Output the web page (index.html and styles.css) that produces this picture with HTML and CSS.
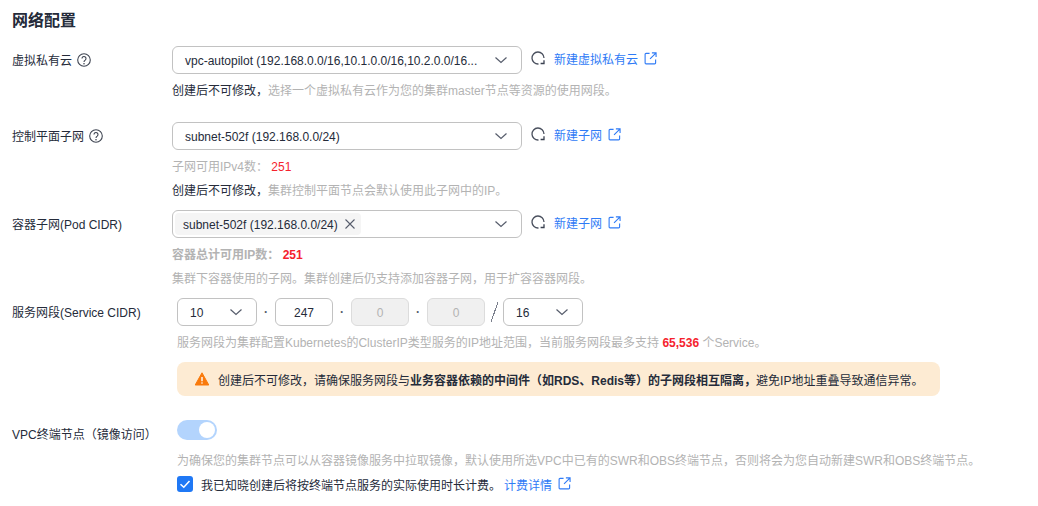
FILE: index.html
```html
<!DOCTYPE html>
<html lang="zh-CN">
<head>
<meta charset="utf-8">
<title>网络配置</title>
<link rel="stylesheet" href="styles.css">
</head>
<body>
<svg class="defs" width="0" height="0" aria-hidden="true">
  <symbol id="i-chev" viewBox="0 0 16 16"><path d="M2.500 5.500 8 10.500l5.500-5" fill="none" stroke="#575d6c" stroke-width="1.200"/></symbol>
  <symbol id="i-refresh" viewBox="0 0 14 14"><path d="M7.500 13A6 6 0 1 1 13 7" fill="none" stroke="#4a505e" stroke-width="1.300"/><path d="M13 9.200v3.300H9.600" fill="none" stroke="#3a4150" stroke-width="1.300"/></symbol>
  <symbol id="i-ext" viewBox="0 0 14 14"><path d="M6 1.500H2.200a1 1 0 0 0-1 1v9.300a1 1 0 0 0 1 1h9.300a1 1 0 0 0 1-1V8M6.500 7.500 12.500 1.500M8.500 1h4.500v4.500" fill="none" stroke="#2f7bf6" stroke-width="1.200"/></symbol>
  <symbol id="i-help" viewBox="0 0 14 14"><circle cx="7" cy="7" r="6.300" fill="none" stroke="#3f4552" stroke-width="1.100"/><path d="M5 5.500a2 2 0 1 1 3.200 1.600C7.500 7.600 7 8 7 9" fill="none" stroke="#3f4552" stroke-width="1.100"/><circle cx="7" cy="10.700" r=".8" fill="#3f4552"/></symbol>
</svg>
<main class="page">
  <h2 class="title">网络配置</h2>

  <section class="row row-vpc">
    <div class="label">虚拟私有云<svg class="help"><use href="#i-help"/></svg></div>
    <div class="body">
      <div class="ctl-line">
        <div class="select wide"><span class="val">vpc-autopilot (192.168.0.0/16,10.1.0.0/16,10.2.0.0/16...</span><svg class="chev"><use href="#i-chev"/></svg></div>
        <svg class="refresh"><use href="#i-refresh"/></svg>
        <a class="link">新建虚拟私有云<svg class="ext"><use href="#i-ext"/></svg></a>
      </div>
      <p class="hint first"><span class="strong">创建后不可修改，</span>选择一个虚拟私有云作为您的集群master节点等资源的使用网段。</p>
    </div>
  </section>

  <section class="row row-ctrl">
    <div class="label">控制平面子网<svg class="help"><use href="#i-help"/></svg></div>
    <div class="body">
      <div class="ctl-line">
        <div class="select wide"><span class="val">subnet-502f (192.168.0.0/24)</span><svg class="chev"><use href="#i-chev"/></svg></div>
        <svg class="refresh"><use href="#i-refresh"/></svg>
        <a class="link">新建子网<svg class="ext"><use href="#i-ext"/></svg></a>
      </div>
      <p class="hint first">子网可用IPv4数： <span class="red">251</span></p>
      <p class="hint"><span class="strong">创建后不可修改，</span>集群控制平面节点会默认使用此子网中的IP。</p>
    </div>
  </section>

  <section class="row row-pod">
    <div class="label">容器子网(Pod CIDR)</div>
    <div class="body">
      <div class="ctl-line">
        <div class="select wide tagged">
          <span class="tag">subnet-502f (192.168.0.0/24)<svg class="close" viewBox="0 0 10 10"><path d="M.5.500l9 9M9.500.500l-9 9" stroke="#575d6c" stroke-width="1.100"/></svg></span>
          <svg class="chev"><use href="#i-chev"/></svg>
        </div>
        <svg class="refresh"><use href="#i-refresh"/></svg>
        <a class="link">新建子网<svg class="ext"><use href="#i-ext"/></svg></a>
      </div>
      <p class="hint first bold">容器总计可用IP数： <span class="red">251</span></p>
      <p class="hint">集群下容器使用的子网。集群创建后仍支持添加容器子网，用于扩容容器网段。</p>
    </div>
  </section>

  <section class="row row-svc">
    <div class="label">服务网段(Service CIDR)</div>
    <div class="body indent">
      <div class="cidr">
        <div class="select small"><span class="val">10</span><svg class="chev"><use href="#i-chev"/></svg></div>
        <span class="dot">·</span>
        <div class="octet">247</div>
        <span class="dot">·</span>
        <div class="octet off">0</div>
        <span class="dot">·</span>
        <div class="octet off">0</div>
        <span class="slash"></span>
        <div class="select small"><span class="val">16</span><svg class="chev"><use href="#i-chev"/></svg></div>
      </div>
      <p class="hint first">服务网段为集群配置Kubernetes的ClusterIP类型服务的IP地址范围，当前服务网段最多支持 <b class="red">65,536</b> 个Service。</p>
      <div class="alert">
        <svg class="warn" viewBox="0 0 14 14"><path d="M7 .800 13.800 13H.2z" fill="#f97a0c" stroke="#f97a0c" stroke-linejoin="round"/><path d="M7 5v4.300" stroke="#fff" stroke-width="1.400"/><circle cx="7" cy="11" r=".8" fill="#fff"/></svg>
        <span>创建后不可修改，请确保服务网段与<b>业务容器依赖的中间件（如RDS、Redis等）的子网段相互隔离，</b>避免IP地址重叠导致通信异常。</span>
      </div>
    </div>
  </section>

  <section class="row row-vpce">
    <div class="label">VPC终端节点（镜像访问）</div>
    <div class="body indent">
      <div class="switch"><span class="knob"></span></div>
      <p class="hint gap">为确保您的集群节点可以从容器镜像服务中拉取镜像，默认使用所选VPC中已有的SWR和OBS终端节点，否则将会为您自动新建SWR和OBS终端节点。</p>
      <div class="check-line">
        <span class="check"><svg viewBox="0 0 16 16"><path d="M3.500 8.200 6.800 11.300 12.500 5" fill="none" stroke="#fff" stroke-width="1.500"/></svg></span>
        <span class="strong">我已知晓创建后将按终端节点服务的实际使用时长计费。</span>
        <a class="link bill">计费详情<svg class="ext"><use href="#i-ext"/></svg></a>
      </div>
    </div>
  </section>
</main>
</body>
</html>
```

FILE: styles.css
```css
* { box-sizing: border-box; }
html, body { margin: 0; padding: 0; background: #fff; }
body {
  font-family: "Liberation Sans", "Noto Sans CJK SC", sans-serif;
  font-size: 12px;
  color: #252b3a;
  overflow: hidden;
}
.defs { position: absolute; }
.page { width: 1038px; height: 506px; padding: 11px 0 0 12px; }
.title { margin: 0 0 15px; font-size: 16px; line-height: 20px; font-weight: 700; color: #252b3a; }

.row { display: flex; }
.row-ctrl { margin-top: 20px; }
.row-pod, .row-svc { margin-top: 8px; }
.row-vpce { margin-top: 24px; }

.label { width: 160px; flex: none; height: 28px; padding-top: 2px; display: flex; align-items: center; line-height: 26px; color: #252b3a; }
.help { width: 14px; height: 14px; margin-left: 5px; margin-top: -2px; }
.body { flex: 1; min-width: 0; }
.indent { padding-left: 5px; }

.ctl-line { display: flex; align-items: center; height: 28px; }
.select {
  height: 28px;
  display: flex;
  align-items: center;
  justify-content: space-between;
  background: #fff;
  border: 1px solid #c2c2c2;
  border-radius: 6px;
}
.wide { width: 350px; padding: 0 12px; }
.small { width: 80px; padding: 0 12px; }
.val { display: block; padding-top: 2px; white-space: nowrap; color: #252b3a; }
.tagged { padding-left: 2px; }
.tag {
  height: 22px;
  display: flex;
  align-items: center;
  padding: 2px 6px 0 8px;
  background: #f5f5f5;
  border-radius: 4px;
  color: #252b3a;
}
.close { width: 10px; height: 10px; margin-left: 7px; margin-top: -2px; }
.chev { width: 16px; height: 16px; flex: none; }
.refresh { width: 14px; height: 14px; margin: -4px 9px 0; flex: none; }
.link { display: inline-flex; align-items: center; margin-top: -4px; color: #2f7bf6; }
.ext { width: 13px; height: 13px; margin-left: 6px; }

.hint { margin: 0; padding-top: 2px; line-height: 22px; color: #b3b3b3; white-space: nowrap; }
.first { margin-top: 4px; }
.gap { margin-top: 8px; }
.bold { font-weight: 700; }
.strong { color: #252b3a; }
.red { color: #f5222d; }

.cidr { display: flex; align-items: center; height: 28px; }
.dot { width: 18px; text-align: center; color: #575d6c; font-weight: 700; }
.octet {
  width: 58px;
  height: 28px;
  line-height: 28px;
  text-align: center;
  border: 1px solid #c2c2c2;
  border-radius: 6px;
  color: #252b3a;
}
.off { background: #f0f0f0; border-color: #dcdcdc; color: #b3b3b3; }
.slash { width: 18px; height: 28px; background: linear-gradient(to bottom right, transparent 46%, #7a7f8c 46%, #7a7f8c 54%, transparent 54%) center / 7px 20px no-repeat; }

.alert {
  width: 763px;
  height: 34px;
  margin-top: 8px;
  padding-left: 18px;
  display: flex;
  align-items: center;
  background: #fdebd3;
  border-radius: 8px;
  color: #252b3a;
}
.warn { width: 14px; height: 14px; margin-right: 9px; flex: none; }

.switch { width: 40px; height: 20px; padding: 2px; border-radius: 10px; background: #b3d4fd; display: flex; justify-content: flex-end; }
.knob { width: 16px; height: 16px; border-radius: 50%; background: #fff; }
.check-line { display: flex; align-items: center; height: 24px; }
.check {
  width: 16px; height: 16px; margin-right: 8px;
  background: #1f78f5; border-radius: 3px; display: flex;
}
.check svg { width: 16px; height: 16px; }
.bill { margin-left: 3px; margin-top: 0; }
.bill .ext { margin-top: -2px; }
```
